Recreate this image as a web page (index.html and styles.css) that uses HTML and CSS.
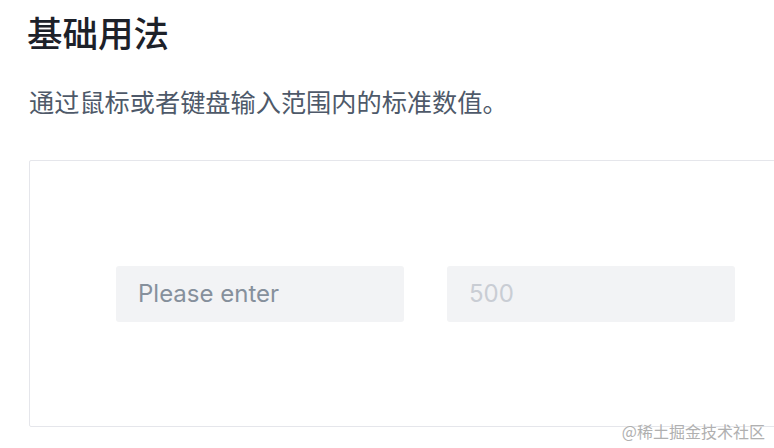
FILE: index.html
```html
<!DOCTYPE html>
<html lang="zh-CN">
<head>
    <meta charset="UTF-8">
    <meta name="viewport" content="width=device-width, initial-scale=1">
    <title>基础用法</title>
    <link rel="stylesheet" href="styles.css">
</head>
<body>
    <div class="page">
        <h2 class="title">基础用法</h2>
        <p class="desc">通过鼠标或者键盘输入范围内的标准数值。</p>

        <div class="demo">
            <div class="input-row">
                <input class="input" type="text" placeholder="Please enter">
                <input class="input" type="text" placeholder="500" disabled>
            </div>
        </div>
    </div>

    <span class="watermark">@稀土掘金技术社区</span>
</body>
</html>
```

FILE: styles.css
```css
* {
    margin: 0;
    padding: 0;
    box-sizing: border-box;
}
html, body {
    height: 100%;
    overflow: hidden;
}
body {
    font-family: "Noto Sans CJK SC", "Noto Sans", sans-serif;
    background: #fff;
    position: relative;
}
.page {
    padding: 12px 0 0 27px;
}
.title {
    font-size: 35.5px;
    line-height: 40px;
    font-weight: 500;
    color: #1d2129;
}
.desc {
    margin-top: 35px;
    padding-left: 2px;
    font-size: 25.2px;
    line-height: 28px;
    color: #4e5969;
}
.demo {
    margin: 45px 0 0 2px;
    width: 820px;
    height: 267px;
    border: 1.5px solid #e5e6eb;
    border-radius: 2px;
    display: flex;
    align-items: center;
    padding-left: 86px;
}
.input-row {
    display: flex;
    gap: 43px;
}
.input {
    width: 288px;
    height: 56px;
    padding: 0 21px;
    border: 1.5px solid transparent;
    border-radius: 3px;
    background: #f2f3f5;
    font-family: Inter, "Noto Sans", sans-serif;
    font-size: 24px;
    color: #1d2129;
    outline: none;
}
.input::placeholder {
    color: #86909c;
}
.input:disabled::placeholder {
    color: #c9cdd4;
}
.watermark {
    position: absolute;
    right: 9px;
    bottom: 5px;
    font-size: 16px;
    color: #b0b0b0;
    text-shadow: 0 0 2px #fff;
}
```
